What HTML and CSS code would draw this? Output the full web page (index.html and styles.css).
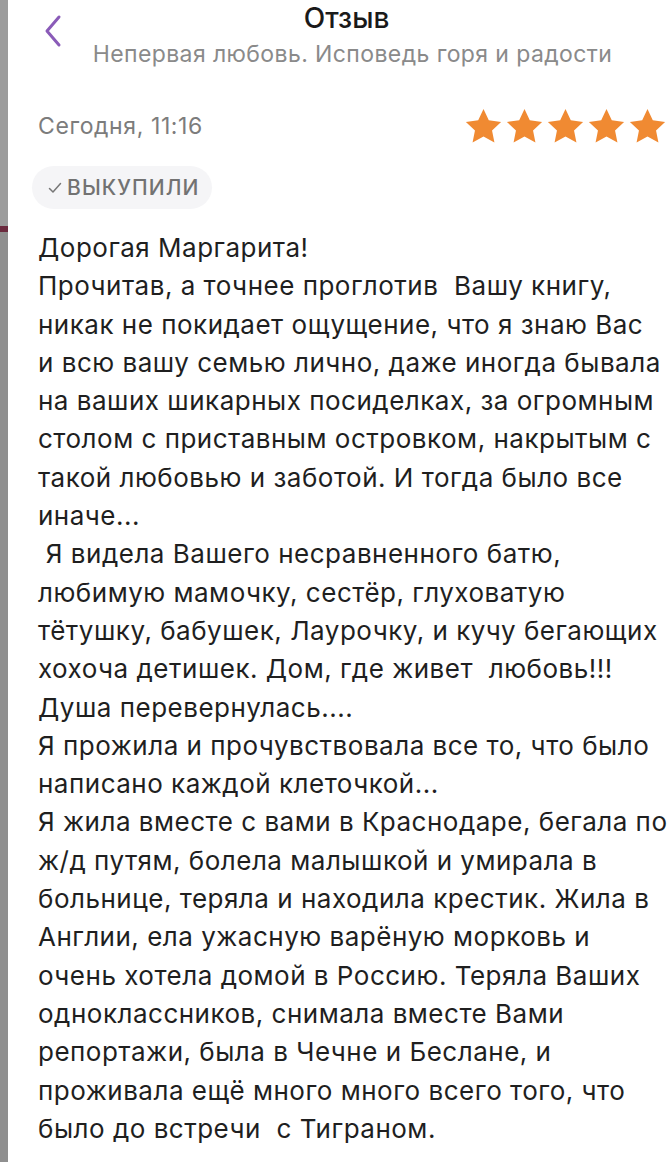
FILE: index.html
```html
<!DOCTYPE html>
<html lang="ru">
<head>
<meta charset="utf-8">
<title>Отзыв</title>
<link rel="stylesheet" href="styles.css">
</head>
<body>
<div class="page">
  <div class="edge"><span class="band b1"></span><span class="band b2"></span><span class="band b3"></span></div>
  <main class="screen">
    <header class="topbar">
      <svg class="back" viewBox="0 0 20 34" width="20" height="34"><path d="M16 3 L4 17 L16 31" fill="none" stroke="#8a5bb8" stroke-width="3" stroke-linecap="round" stroke-linejoin="round"/></svg>
      <div class="titles">
        <div class="title">Отзыв</div>
        <div class="subtitle">Непервая любовь. Исповедь горя и радости</div>
      </div>
    </header>
    <div class="meta">
      <div class="date">Сегодня, 11:16</div>
      <div class="stars">
        <svg viewBox="0 0 24 24"><path d="M12 1.8l3.1 6.6 7.2.9-5.3 5 1.4 7.1L12 17.9l-6.4 3.5 1.4-7.1-5.3-5 7.2-.9z"/></svg>
        <svg viewBox="0 0 24 24"><path d="M12 1.8l3.1 6.6 7.2.9-5.3 5 1.4 7.1L12 17.9l-6.4 3.5 1.4-7.1-5.3-5 7.2-.9z"/></svg>
        <svg viewBox="0 0 24 24"><path d="M12 1.8l3.1 6.6 7.2.9-5.3 5 1.4 7.1L12 17.9l-6.4 3.5 1.4-7.1-5.3-5 7.2-.9z"/></svg>
        <svg viewBox="0 0 24 24"><path d="M12 1.8l3.1 6.6 7.2.9-5.3 5 1.4 7.1L12 17.9l-6.4 3.5 1.4-7.1-5.3-5 7.2-.9z"/></svg>
        <svg viewBox="0 0 24 24"><path d="M12 1.8l3.1 6.6 7.2.9-5.3 5 1.4 7.1L12 17.9l-6.4 3.5 1.4-7.1-5.3-5 7.2-.9z"/></svg>
      </div>
    </div>
    <div class="badge"><svg class="check" viewBox="0 0 14 12" width="14" height="12"><path d="M1.5 6.5 L5 10 L12.5 1.5" fill="none" stroke="#777" stroke-width="1.5" stroke-linecap="round" stroke-linejoin="round"/></svg>ВЫКУПИЛИ</div>
    <div class="review">
      <p>Дорогая Маргарита!</p>
      <p>Прочитав, а точнее проглотив&nbsp; Вашу книгу,</p>
      <p>никак не покидает ощущение, что я знаю Вас</p>
      <p>и всю вашу семью лично, даже иногда бывала</p>
      <p>на ваших шикарных посиделках, за огромным</p>
      <p>столом с приставным островком, накрытым с</p>
      <p>такой любовью и заботой. И тогда было все</p>
      <p>иначе...</p>
      <p>&nbsp;Я видела Вашего несравненного батю,</p>
      <p>любимую мамочку, сестёр, глуховатую</p>
      <p>тётушку, бабушек, Лаурочку, и кучу бегающих</p>
      <p>хохоча детишек. Дом, где живет&nbsp; любовь!!!</p>
      <p>Душа перевернулась....</p>
      <p>Я прожила и прочувствовала все то, что было</p>
      <p>написано каждой клеточкой...</p>
      <p>Я жила вместе с вами в Краснодаре, бегала по</p>
      <p>ж/д путям, болела малышкой и умирала в</p>
      <p>больнице, теряла и находила крестик. Жила в</p>
      <p>Англии, ела ужасную варёную морковь и</p>
      <p>очень хотела домой в Россию. Теряла Ваших</p>
      <p>одноклассников, снимала вместе Вами</p>
      <p>репортажи, была в Чечне и Беслане, и</p>
      <p>проживала ещё много много всего того, что</p>
      <p>было до встречи&nbsp; с Тиграном.</p>
    </div>
  </main>
</div>
</body>
</html>
```
FILE: styles.css
```css
html, body {
  margin: 0;
  padding: 0;
  background: #ffffff;
}
.page {
  display: flex;
  width: 672px;
  height: 1162px;
  overflow: hidden;
}
.edge {
  width: 8px;
  flex: none;
  background: #a3a3a3;
  display: flex;
  flex-direction: column;
}
.band { display: block; }
.b1 { height: 226px; background: #9c9c9c; }
.b2 { height: 6px; background: #6b2a3e; }
.b3 { flex: 1; background: #8f8f8f; }
.screen {
  flex: 1;
  padding: 0 0 0 30px;
  font-family: Inter, "Open Sans", "Liberation Sans", sans-serif;
  color: #1f1f1f;
}
.topbar {
  display: flex;
  align-items: flex-start;
  height: 84px;
}
.back {
  margin: 14px 0 0 5px;
  flex: none;
}
.titles {
  flex: 1;
  text-align: center;
  padding-right: 30px;
}
.title {
  font-size: 28px;
  font-weight: 500;
  line-height: 36px;
  color: #1a1a1a;
  margin-left: -12px;
}
.subtitle {
  font-size: 23px;
  line-height: 36px;
  color: #8a8a8a;
  letter-spacing: 0.4px;
  margin-left: 0;
}
.meta {
  display: flex;
  justify-content: space-between;
  align-items: center;
  height: 80px;
  margin-top: 2px;
  padding-right: 4px;
}
.date {
  font-size: 23px;
  color: #7c7c7c;
  letter-spacing: 0.6px;
}
.stars {
  display: flex;
}
.stars svg {
  width: 41px;
  height: 41px;
  fill: #f08a32;
}
.badge {
  display: inline-flex;
  align-items: center;
  height: 43px;
  padding: 0 12px 0 16px;
  margin-left: -6px;
  border-radius: 22px;
  background: #f5f5f7;
  font-size: 21px;
  font-weight: 500;
  color: #727272;
  letter-spacing: 1.1px;
}
.check {
  margin-right: 5px;
  flex: none;
}
.review {
  margin-top: 20px;
  font-size: 26px;
  line-height: 38.3px;
  letter-spacing: 0.5px;
  color: #1f1f1f;
}
.review p {
  margin: 0;
  white-space: nowrap;
}
```
